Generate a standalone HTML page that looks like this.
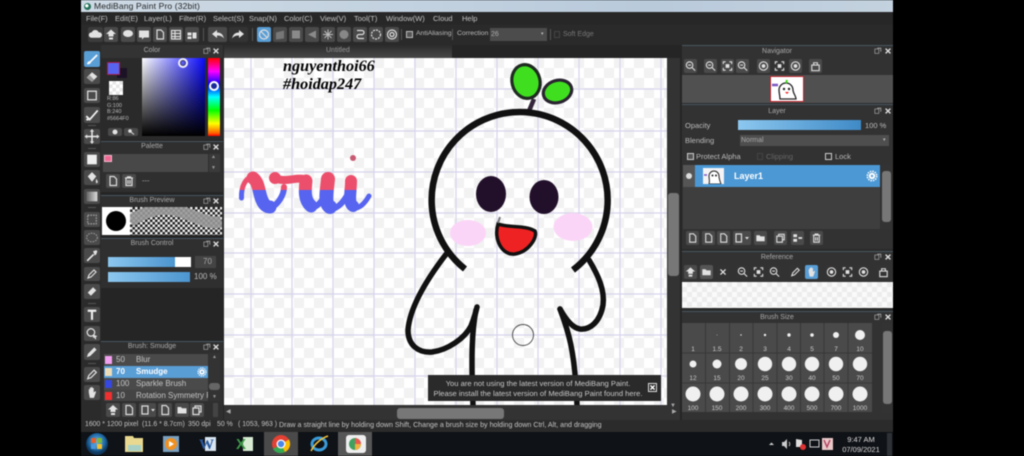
<!DOCTYPE html>
<html><head><meta charset="utf-8"><style>
*{box-sizing:border-box}
html,body{margin:0;padding:0;background:#000;width:1024px;height:456px;overflow:hidden}
body{font-family:"Liberation Sans",sans-serif;color:#c4c4c4;font-size:7.5px;position:relative}
#app{position:absolute;left:0;top:0;width:1024px;height:456px;filter:blur(.45px)}
.a{position:absolute;white-space:nowrap;line-height:1}
.r{position:absolute}
.b{position:absolute;background:#4a4a4a;border-radius:2px;width:14px;height:14px;display:block}
.b svg{position:absolute;left:0;top:0;width:100%;height:100%}
.h{position:absolute;color:#aaa;font-size:7px;line-height:12px;text-align:center;height:12px}
svg{display:block}
.i{fill:none;stroke:#ddd;stroke-width:1.2}
.f{fill:#e2e2e2;stroke:none}
</style></head><body><div id="app">
<svg width="0" height="0" style="position:absolute"><defs>
<symbol id="doc" viewBox="0 0 14 14"><path class="i" d="M4 2.5h4l2.5 2.5v6.5H4z"/></symbol>
<symbol id="fold" viewBox="0 0 14 14"><path class="f" d="M2.500 4h3.500l1 1.200h4.500v5.300H2.500z"/></symbol>
<symbol id="tr" viewBox="0 0 14 14"><path class="i" d="M3 4h8M5.500 4V2.800h3V4M4 4v7.500h6V4M6 6v4M8 6v4"/></symbol>
<symbol id="up" viewBox="0 0 14 14"><path class="f" d="M7 2l5 4.500H9.500V9h-5V6.500H2zM5 10h4v2H5z"/></symbol>
<symbol id="zm" viewBox="0 0 14 14"><circle class="i" cx="6" cy="6" r="3.500"/><path class="i" d="M8.500 8.500L12 12M4.500 6h3"/></symbol>
<symbol id="fit" viewBox="0 0 14 14"><path class="i" d="M2.500 5V2.500H5M9 2.500h2.500V5M11.500 9v2.500H9M5 11.500H2.500V9"/><rect class="f" x="5" y="5" width="4" height="4"/></symbol>
<symbol id="rot" viewBox="0 0 14 14"><circle class="i" cx="7" cy="7" r="4.500"/><circle class="f" cx="7" cy="7" r="2"/></symbol>
<symbol id="lock" viewBox="0 0 14 14"><rect class="i" x="3" y="6" width="8" height="6"/><path class="i" d="M5 6V3.500h4V6"/></symbol>
<symbol id="x" viewBox="0 0 14 14"><path d="M4 4l6 6M10 4l-6 6" stroke="#ddd" stroke-width="1.600"/></symbol>
<symbol id="hand" viewBox="0 0 14 14"><path class="f" d="M4 7V4h1v2.500V2.500h1.200V6V2h1.200v4V2.800h1.200V7l1.400-1.300.8.700-2 5.600H5z"/></symbol>
<symbol id="pen" viewBox="0 0 14 14"><path class="i" d="M3 11l1-3 5-5 2 2-5 5z"/></symbol>
<symbol id="pw" viewBox="0 0 10 10"><rect x="1" y="2.500" width="5" height="5.500" fill="none" stroke="#aaa" stroke-width=".8"/><path d="M4 1.500h4.500V6" fill="none" stroke="#aaa"/></symbol>
<symbol id="cl" viewBox="0 0 10 10"><path d="M2 2l6 6M8 2l-6 6" stroke="#ddd" stroke-width="1.700"/></symbol>
<symbol id="gear" viewBox="0 0 14 14"><circle cx="7" cy="7" r="3.800" fill="#fff"/><circle cx="7" cy="7" r="5.500" fill="none" stroke="#fff" stroke-width="1.800" stroke-dasharray="1.700 1.200"/><circle cx="7" cy="7" r="1.400" fill="#5b9fd5"/></symbol>
</defs></svg>

<!-- base -->
<div class="r" style="left:81px;top:0;width:812px;height:432px;background:#252525"></div>
<!-- title -->
<div class="r" style="left:81px;top:0;width:812px;height:12px;background:linear-gradient(90deg,#cdd9e4,#c3d2e0 40%,#b9cadb 70%,#c4d2df)"></div>
<div class="r" style="left:84px;top:3px;width:7px;height:7px;border-radius:50%;background:radial-gradient(circle at 40% 40%,#fff 25%,#2a7f62 30%,#1c4f44)"></div>
<div class="a" style="left:94px;top:2px;color:#222;font-size:8.500px;letter-spacing:.15px">MediBang Paint Pro (32bit)</div>
<!-- menu -->
<div class="r" style="left:81px;top:12px;width:812px;height:13px;background:#272727"></div>
<div class="a" style="left:86px;top:15px">File(F)</div><div class="a" style="left:115px;top:15px">Edit(E)</div><div class="a" style="left:144px;top:15px">Layer(L)</div><div class="a" style="left:179px;top:15px">Filter(R)</div><div class="a" style="left:213px;top:15px">Select(S)</div><div class="a" style="left:249px;top:15px">Snap(N)</div><div class="a" style="left:284px;top:15px">Color(C)</div><div class="a" style="left:320px;top:15px">View(V)</div><div class="a" style="left:354px;top:15px">Tool(T)</div><div class="a" style="left:386px;top:15px">Window(W)</div><div class="a" style="left:433px;top:15px">Cloud</div><div class="a" style="left:462px;top:15px">Help</div>
<!-- toolbar -->
<div class="r" style="left:81px;top:25px;width:812px;height:20px;background:#2a2a2a"></div>
<div class="b" style="left:88px;top:27px;width:15px;height:15px;background:#3c3c3c"><svg viewBox="0 0 14 14"><path class="f" d="M3 10a2.500 2.500 0 0 1 .5-5A3.500 3.500 0 0 1 10 5a2.500 2.500 0 0 1 1 5z"/></svg></div>
<div class="b" style="left:104px;top:27px;height:15px"><svg><use href="#up"/></svg></div>
<div class="b" style="left:121px;top:27px;height:15px"><svg viewBox="0 0 14 14"><ellipse class="f" cx="7" cy="6" rx="5" ry="3.500"/></svg></div>
<div class="b" style="left:137px;top:27px;height:15px"><svg viewBox="0 0 14 14"><path class="f" d="M2 3h10v7H7l-2 2v-2H2z"/></svg></div>
<div class="b" style="left:153px;top:27px;height:15px"><svg><use href="#doc"/></svg></div>
<div class="b" style="left:169px;top:27px;height:15px"><svg viewBox="0 0 14 14"><path class="i" d="M2.500 3h9v8.500h-9zM2.500 6h9M2.500 9h9M6 3v8.500"/></svg></div>
<div class="b" style="left:185px;top:27px;height:15px"><svg viewBox="0 0 14 14"><path class="f" d="M2.500 5h4v3h-4zM7.500 5h4v6h-4zM2.500 9h4v2.500h-4z"/></svg></div>
<div class="r" style="left:203px;top:28px;width:1px;height:13px;background:#555"></div>
<div class="b" style="left:208px;top:27px;width:19px;height:15px"><svg viewBox="0 0 19 15"><path class="f" d="M4 7l5-4v2.500c4 0 6 2 7 6-2-2.500-4-3-7-3V11z"/></svg></div>
<div class="b" style="left:229px;top:27px;width:19px;height:15px;background:#333"><svg viewBox="0 0 19 15"><path class="f" d="M15 7l-5-4v2.500c-4 0-6 2-7 6 2-2.500 4-3 7-3V11z"/></svg></div>
<div class="r" style="left:252px;top:28px;width:1px;height:13px;background:#555"></div>
<div class="b" style="left:257px;top:27px;height:15px;background:#5a9ed6"><svg viewBox="0 0 14 14"><circle class="i" cx="7" cy="7" r="4.500"/><path class="i" d="M4 4l6 6"/></svg></div>
<div class="b" style="left:273px;top:27px;height:15px"><svg viewBox="0 0 14 14"><path d="M3 5l8-2v8l-8 1z" fill="#777"/></svg></div>
<div class="b" style="left:289px;top:27px;height:15px"><svg viewBox="0 0 14 14"><rect x="3" y="3" width="8" height="8" fill="#8a8a8a"/></svg></div>
<div class="b" style="left:305px;top:27px;height:15px"><svg viewBox="0 0 14 14"><path d="M3 7l8-4v8z" fill="#8a8a8a"/></svg></div>
<div class="b" style="left:321px;top:27px;height:15px"><svg viewBox="0 0 14 14"><path d="M7 2v10M2 7h10M3.500 3.500l7 7M10.500 3.500l-7 7" stroke="#bbb"/></svg></div>
<div class="b" style="left:337px;top:27px;height:15px"><svg viewBox="0 0 14 14"><circle cx="7" cy="7" r="4.500" fill="#888"/></svg></div>
<div class="b" style="left:353px;top:27px;height:15px"><svg viewBox="0 0 14 14"><path class="i" d="M4 3h5a2 2 0 0 1 0 4H6a2 2 0 0 0 0 4h5"/></svg></div>
<div class="b" style="left:369px;top:27px;height:15px"><svg viewBox="0 0 14 14"><circle class="i" cx="7" cy="7" r="4.500" stroke-dasharray="2 1"/></svg></div>
<div class="b" style="left:385px;top:27px;height:15px"><svg viewBox="0 0 14 14"><circle class="i" cx="7" cy="7" r="4.500"/><circle class="i" cx="7" cy="7" r="2"/></svg></div>
<div class="r" style="left:401px;top:29px;width:1px;height:11px;background:#555"></div>
<div class="r" style="left:406px;top:31px;width:7px;height:7px;border:1px solid #bbb;background:#555"></div>
<div class="a" style="left:416px;top:31px;font-size:6.800px;color:#bbb">AntiAliasing</div>
<div class="r" style="left:452px;top:29px;width:1px;height:11px;background:#555"></div>
<div class="a" style="left:457px;top:31px;font-size:6.800px;color:#bbb">Correction</div>
<div class="r" style="left:490px;top:28px;width:57px;height:13px;background:#4c4c4c"></div>
<div class="a" style="left:491px;top:31px;font-size:7px;color:#aaa">26</div>
<div class="a" style="left:541px;top:32px;font-size:5px;color:#bbb">▾</div>
<div class="r" style="left:550px;top:29px;width:1px;height:11px;background:#555"></div>
<div class="r" style="left:554px;top:31px;width:6px;height:7px;border:1px solid #444"></div>
<div class="a" style="left:563px;top:31px;font-size:7px;color:#777">Soft Edge</div>

<!-- tools column -->
<div class="r" style="left:81px;top:45px;width:20px;height:375px;background:#2b2b2b"></div>
<div class="b" style="left:84px;top:51px;width:16px;height:16px;background:#5a9ed6"><svg viewBox="0 0 14 14"><path d="M2.500 11.500C3 9.500 4 9 5 9L11 3l1 1-6 6c0 1-1.500 2-3.500 1.500z" fill="#fff"/></svg></div>
<div class="b" style="left:84px;top:69px;width:16px;height:15px"><svg viewBox="0 0 14 14"><path class="f" d="M2 8l5-5 5 4-5 5z"/><path d="M5 6l4 4-2 2-5-4z" fill="#999"/></svg></div>
<div class="b" style="left:84px;top:88px;width:16px;height:15px"><svg viewBox="0 0 14 14"><rect class="i" x="3" y="3" width="8" height="8" stroke-width="1.400"/></svg></div>
<div class="b" style="left:84px;top:107px;width:16px;height:16px"><svg viewBox="0 0 14 14"><path d="M2 8l3 3 7-8M2 11h2" fill="none" stroke="#eee" stroke-width="1.600"/></svg></div>
<div class="b" style="left:84px;top:129px;width:16px;height:15px"><svg viewBox="0 0 14 14"><path d="M7 1.500v11M1.500 7h11" stroke="#eee" stroke-width="1.400"/><path class="f" d="M7 0l2 2.500H5zM7 14l2-2.500H5zM0 7l2.500-2v4zM14 7l-2.500-2v4z"/></svg></div>
<div class="b" style="left:84px;top:152px;width:16px;height:15px"><svg viewBox="0 0 14 14"><rect x="2.500" y="2.500" width="9" height="9" fill="#eee"/></svg></div>
<div class="b" style="left:84px;top:170px;width:16px;height:15px"><svg viewBox="0 0 14 14"><path class="f" d="M3 6l4-4 4 4-4 5z"/><path d="M11 8c1 2 2 3 1 4s-2 0-1-4z" fill="#ddd"/></svg></div>
<div class="b" style="left:84px;top:189px;width:16px;height:15px"><svg viewBox="0 0 14 14"><defs><linearGradient id="gg" x1="0" x2="1"><stop offset="0" stop-color="#666"/><stop offset="1" stop-color="#ddd"/></linearGradient></defs><rect x="2" y="2.500" width="10" height="9" fill="url(#gg)"/></svg></div>
<div class="b" style="left:84px;top:212px;width:16px;height:15px"><svg viewBox="0 0 14 14"><rect x="3" y="3" width="8" height="8" fill="none" stroke="#aaa" stroke-dasharray="1.500 1"/></svg></div>
<div class="b" style="left:84px;top:230px;width:16px;height:15px"><svg viewBox="0 0 14 14"><ellipse cx="7" cy="7" rx="5" ry="4" fill="none" stroke="#999" stroke-dasharray="1.500 1"/></svg></div>
<div class="b" style="left:84px;top:248px;width:16px;height:15px"><svg viewBox="0 0 14 14"><path d="M2.500 12l6-6" stroke="#eee" stroke-width="1.500"/><path class="f" d="M8 3l3-1 1 1-1 3-1.500 1z"/></svg></div>
<div class="b" style="left:84px;top:267px;width:16px;height:14px"><svg><use href="#pen"/></svg></div>
<div class="b" style="left:84px;top:284px;width:16px;height:15px"><svg viewBox="0 0 14 14"><path class="f" d="M3 8l5-5 3 3-5 5z"/></svg></div>
<div class="b" style="left:84px;top:307px;width:16px;height:15px"><svg viewBox="0 0 14 14"><path d="M3 3.500h8M7 3.500V12" stroke="#eee" stroke-width="2"/></svg></div>
<div class="b" style="left:84px;top:326px;width:16px;height:15px"><svg viewBox="0 0 14 14"><circle class="i" cx="6" cy="6" r="3.500"/><path class="f" d="M8 8l4 1.500-1.500 1L11 12l-1 .5-1-2-1 1z"/></svg></div>
<div class="b" style="left:84px;top:344px;width:16px;height:16px"><svg viewBox="0 0 14 14"><path class="f" d="M2.500 11.500l1-3L9 3l2 2-5.500 5.500z"/></svg></div>
<div class="b" style="left:84px;top:367px;width:16px;height:15px"><svg><use href="#pen"/></svg></div>
<div class="b" style="left:84px;top:385px;width:16px;height:15px"><svg><use href="#hand"/></svg></div>
<div class="r" style="left:88px;top:125px;width:8px;height:1px;background:#555"></div><div class="r" style="left:88px;top:148px;width:8px;height:1px;background:#555"></div><div class="r" style="left:88px;top:207px;width:8px;height:1px;background:#555"></div><div class="r" style="left:88px;top:303px;width:8px;height:1px;background:#555"></div><div class="r" style="left:88px;top:363px;width:8px;height:1px;background:#555"></div>

<!-- Color panel -->
<div class="r" style="left:101px;top:45px;width:122px;height:95px;background:#2a2a2a"></div>
<div class="r" style="left:101px;top:45px;width:122px;height:13px;background:#333"></div>
<div class="h" style="left:101px;top:45px;width:102px">Color</div>
<svg class="r" style="left:203px;top:47px" width="8" height="8"><use href="#pw"/></svg><svg class="r" style="left:212px;top:47px" width="8" height="8"><use href="#cl"/></svg>
<div class="r" style="left:117px;top:68px;width:10px;height:10px;background:#1c1226"></div>
<div class="r" style="left:107px;top:62px;width:13px;height:13px;background:#5664f0;border:1.500px solid #a51d4a"></div>
<div class="r" style="left:109px;top:81px;width:14px;height:14px;background:repeating-conic-gradient(#e6e6e6 0 25%,#fff 0 50%) 0 0/7px 7px"></div>
<div class="a" style="left:107px;top:96px;font-size:5.500px;line-height:6.500px;color:#bbb">R:86<br>G:100<br>B:240<br>#5664F0</div>
<div class="b" style="left:108px;top:128px;width:14px;height:8px"><svg viewBox="0 0 14 8"><circle class="f" cx="7" cy="4" r="2.500"/></svg></div>
<div class="b" style="left:124px;top:128px;width:14px;height:8px"><svg viewBox="0 0 14 8"><circle class="f" cx="6" cy="3" r="1.800"/><path d="M7 4l3 2.500" stroke="#ddd"/></svg></div>
<div class="r" style="left:142px;top:58px;width:63px;height:78px;background:linear-gradient(to bottom,rgba(0,0,0,0),#000),linear-gradient(to right,#fff,#0a0aff)"></div>
<div class="r" style="left:178px;top:58px;width:10px;height:10px;border-radius:50%;border:2px solid #eef;box-shadow:inset 0 0 0 1px #335"></div>
<div class="r" style="left:208px;top:58px;width:12px;height:78px;background:linear-gradient(to bottom,#f00 0,#f0f 17%,#00f 34%,#0ff 50%,#0f0 67%,#ff0 84%,#f60 96%,#f00 100%)"></div>
<div class="r" style="left:209px;top:81px;width:10px;height:10px;border-radius:50%;border:2px solid #fff;background:#1a2a9a"></div>

<!-- Palette -->
<div class="r" style="left:101px;top:141px;width:122px;height:51px;background:#2f2f2f;border-top:1px solid #4a5660"></div>
<div class="h" style="left:101px;top:141px;width:102px">Palette</div>
<svg class="r" style="left:203px;top:143px" width="8" height="8"><use href="#pw"/></svg><svg class="r" style="left:212px;top:143px" width="8" height="8"><use href="#cl"/></svg>
<div class="r" style="left:103px;top:154px;width:105px;height:18px;background:#484848"></div>
<div class="r" style="left:104px;top:155px;width:8px;height:7px;background:#ee6a92;border:1.500px solid #f3b8cf"></div>
<div class="r" style="left:209px;top:154px;width:11px;height:18px;background:#3a3a3a"></div>
<div class="a" style="left:211px;top:155px;font-size:5px;color:#999">▲</div><div class="a" style="left:211px;top:166px;font-size:5px;color:#999">▼</div>
<div class="b" style="left:106px;top:174px"><svg><use href="#doc"/></svg></div><div class="b" style="left:122px;top:174px"><svg><use href="#tr"/></svg></div>
<div class="a" style="left:142px;top:177px;color:#aaa">---</div>

<!-- Brush Preview -->
<div class="r" style="left:101px;top:195px;width:122px;height:40px;background:#2f2f2f;border-top:1px solid #4a5660"></div>
<div class="h" style="left:101px;top:195px;width:102px">Brush Preview</div>
<svg class="r" style="left:203px;top:197px" width="8" height="8"><use href="#pw"/></svg><svg class="r" style="left:212px;top:197px" width="8" height="8"><use href="#cl"/></svg>
<div class="r" style="left:102px;top:207px;width:28px;height:28px;background:#fff"></div>
<div class="r" style="left:106px;top:211px;width:20px;height:20px;background:#000;border-radius:50%"></div>
<div class="r" style="left:130px;top:207px;width:92px;height:28px;background:repeating-conic-gradient(#222 0 25%,#eee 0 50%) 0 0/5px 5px"></div>
<svg class="r" style="left:130px;top:207px" width="92" height="28"><path d="M0 14C20 2 35 -2 55 6s30 12 37 8" stroke="#999" stroke-width="12" fill="none" opacity=".88"/></svg>

<!-- Brush Control -->
<div class="r" style="left:101px;top:238px;width:122px;height:50px;background:#2f2f2f;border-top:1px solid #4a5660"></div>
<div class="h" style="left:101px;top:238px;width:102px">Brush Control</div>
<svg class="r" style="left:203px;top:240px" width="8" height="8"><use href="#pw"/></svg><svg class="r" style="left:212px;top:240px" width="8" height="8"><use href="#cl"/></svg>
<div class="r" style="left:108px;top:257px;width:83px;height:10px;background:#fff"></div>
<div class="r" style="left:108px;top:257px;width:67px;height:10px;background:linear-gradient(90deg,#8cc7ef,#4c95cf)"></div>
<div class="r" style="left:195px;top:256px;width:21px;height:12px;background:#444"></div><div class="a" style="left:203px;top:258px;font-size:8px;color:#aaa">70</div>
<div class="r" style="left:108px;top:272px;width:82px;height:10px;background:linear-gradient(90deg,#8cc7ef,#4c95cf)"></div>
<div class="a" style="left:194px;top:273px;font-size:8px;color:#bbb">100 %</div>

<!-- Brush panel -->
<div class="r" style="left:101px;top:341px;width:122px;height:79px;background:#2f2f2f;border-top:1px solid #4a5660"></div>
<div class="h" style="left:101px;top:341px;width:102px">Brush: Smudge</div>
<svg class="r" style="left:203px;top:343px" width="8" height="8"><use href="#pw"/></svg><svg class="r" style="left:212px;top:343px" width="8" height="8"><use href="#cl"/></svg>
<div class="r" style="left:104px;top:354px;width:104px;height:12px;background:#4a4a4a"></div>
<div class="r" style="left:104px;top:366px;width:104px;height:12px;background:#5a9ed6"></div>
<div class="r" style="left:104px;top:378px;width:104px;height:12px;background:#4a4a4a"></div>
<div class="r" style="left:104px;top:390px;width:104px;height:11px;background:#444;overflow:hidden"></div>
<div class="r" style="left:105px;top:356px;width:7px;height:8px;background:#f0a0ee"></div><div class="r" style="left:105px;top:368px;width:7px;height:8px;background:#ecdcb8"></div><div class="r" style="left:105px;top:380px;width:7px;height:8px;background:#3648e0"></div><div class="r" style="left:105px;top:392px;width:7px;height:8px;background:#ee3030"></div>
<div class="a" style="left:116px;top:356px;font-size:8px">50</div><div class="a" style="left:136px;top:356px;font-size:8px">Blur</div>
<div class="a" style="left:116px;top:368px;font-size:8px;color:#fff;font-weight:bold">70</div><div class="a" style="left:136px;top:368px;font-size:8px;color:#fff;font-weight:bold">Smudge</div>
<svg class="r" style="left:197px;top:367px" width="10" height="10"><use href="#gear"/></svg>
<div class="a" style="left:116px;top:380px;font-size:8px">100</div><div class="a" style="left:136px;top:380px;font-size:8px">Sparkle Brush</div>
<div class="a" style="left:116px;top:392px;font-size:8px">10</div><div class="r" style="left:136px;top:390px;width:72px;height:11px;overflow:hidden"><div class="a" style="left:0;top:2px;font-size:8px">Rotation Symmetry Pen</div></div>
<div class="r" style="left:209px;top:353px;width:11px;height:48px;background:#333"></div>
<div class="r" style="left:209px;top:383px;width:11px;height:7px;background:#666;border-radius:3px"></div>
<div class="a" style="left:212px;top:355px;font-size:5px;color:#999">▲</div><div class="a" style="left:212px;top:395px;font-size:5px;color:#999">▼</div>
<div class="b" style="left:106px;top:403px"><svg><use href="#up"/></svg></div><div class="b" style="left:122px;top:403px"><svg><use href="#doc"/></svg></div><div class="b" style="left:139px;top:403px;width:17px"><svg viewBox="0 0 17 14"><path class="i" d="M3 3h6v8H3z"/><path d="M12 6h4l-2 2.500z" fill="#ddd"/></svg></div><div class="b" style="left:158px;top:403px"><svg><use href="#doc"/></svg></div><div class="b" style="left:175px;top:403px"><svg><use href="#fold"/></svg></div><div class="b" style="left:190px;top:403px"><svg viewBox="0 0 14 14"><path class="i" d="M3 5h6v6.500H3zM5 5V3h6v6H9"/></svg></div>
<div class="r" style="left:213px;top:403px;width:5px;height:14px;background:#444"></div>

<!-- Canvas tabs -->
<div class="r" style="left:224px;top:45px;width:228px;height:13px;background:linear-gradient(#2c2c2c,#474747)"></div>
<div class="a" style="left:326px;top:47px;font-size:7px;color:#999">Untitled</div>

<!-- Canvas -->
<div class="r" style="left:224px;top:58px;width:443px;height:347px;background:repeating-conic-gradient(#f2f2f2 0 25%,#fff 0 50%) 0 0/20px 20px"></div>
<svg class="r" style="left:0;top:0" width="1024" height="456" viewBox="0 0 1024 456">
<defs><linearGradient id="vui" gradientUnits="userSpaceOnUse" x1="0" y1="160" x2="0" y2="220"><stop offset=".5" stop-color="#ec4f6c"/><stop offset=".5" stop-color="#5664f0"/></linearGradient><clipPath id="cv"><rect x="224" y="58" width="443" height="347"/></clipPath></defs>
<g clip-path="url(#cv)">
<g stroke="#d6d4ea" stroke-width="1.200"><path d="M251 58V405M292 58V405M333 58V405M374 58V405M415 58V405M456 58V405M497 58V405M538 58V405M579 58V405M620 58V405M661 58V405M224 89H667M224 131H667M224 172H667M224 213H667M224 253H667M224 294H667M224 335H667M224 376H667"/></g>
<g fill="none" stroke="url(#vui)" stroke-linecap="round" stroke-linejoin="round">
<path d="M241.500 198C241 186 246 177 253 177" stroke-width="5"/>
<path d="M253 178C259 182 259 194 262 200C264 205 267 207 270 207" stroke-width="13"/>
<path d="M270 208C278 205 284 195 284 187" stroke-width="6"/>
<path d="M275 178C285 183 295 177 304 179" stroke-width="8"/>
<circle cx="275" cy="178" r="3" stroke-width="6"/>
<path d="M306 181C305 190 304 200 311 206" stroke-width="13"/>
<path d="M311 208C318 207 323 200 326 192" stroke-width="6"/>
<path d="M328 179C327 190 324 203 330 207" stroke-width="14"/>
<path d="M330 209C339 209 345 200 350 190" stroke-width="6"/>
<path d="M351 181C351 192 348 203 353 206" stroke-width="12"/>
<path d="M353 208C360 209 365 203 369 196" stroke-width="5"/>
</g>
<circle cx="353" cy="158" r="3" fill="#c85a72"/>
<path d="M534 99L529 111" stroke="#33263a" stroke-width="4.500"/>
<ellipse cx="526" cy="81.500" rx="14" ry="17" transform="rotate(-14 526 81.500)" fill="#3fdf20" stroke="#1f2a20" stroke-width="3.200"/>
<ellipse cx="557.500" cy="91.500" rx="14.500" ry="11" transform="rotate(-18 557.500 91.500)" fill="#3fdf20" stroke="#2a2430" stroke-width="3.200"/>
<ellipse cx="468" cy="233" rx="18" ry="13" fill="#fbd5f7"/><ellipse cx="573" cy="227" rx="19.500" ry="14" fill="#fbd5f7"/>
<path d="M465 269A88 88 0 1 1 573 270" fill="none" stroke="#111" stroke-width="6.500" stroke-linecap="butt"/>
<ellipse cx="491" cy="194" rx="15" ry="18" fill="#22102a"/><ellipse cx="544" cy="197" rx="14.500" ry="17" fill="#22102a"/>
<path d="M498 224C510 228 525 225 535 231C538 238 528 252 515 254C503 256 493 240 498 224Z" fill="#ee2222" stroke="#111" stroke-width="3.500"/>
<path d="M500 217L498 223" stroke="#777" stroke-width="2"/>
<path d="M447 253C430 275 410 305 408 330C408 345 418 353 432 352C448 350 465 338 471 326C474 318 476 312 477 307" fill="none" stroke="#111" stroke-width="5.500" stroke-linecap="round"/>
<path d="M476 310C472 330 471 355 473 405" fill="none" stroke="#111" stroke-width="5.500" stroke-linecap="round"/>
<path d="M589 260C598 275 605 290 603 305C600 322 590 330 580 329C572 328 565 318 560 309" fill="none" stroke="#111" stroke-width="5.500" stroke-linecap="round"/>
<path d="M560 309C568 330 575 350 577 405" fill="none" stroke="#111" stroke-width="5.500" stroke-linecap="round"/>
<circle cx="523" cy="335" r="10.500" fill="none" stroke="#444" stroke-width=".9"/>
</g></svg>
<div class="a" style="left:283px;top:57px;font:italic bold 16.200px/18px 'Liberation Serif',serif;color:#000">nguyenthoi66<br>#hoidap247</div>

<!-- notification -->
<div class="r" style="left:428px;top:375px;width:233px;height:26px;background:#2a2a2a"></div>
<div class="a" style="left:428px;top:379px;width:220px;text-align:center;font-size:7.600px;line-height:9.500px;color:#c8c8c8">You are not using the latest version of MediBang Paint.<br>Please install the latest version of MediBang Paint found here.</div>
<div class="r" style="left:648px;top:383px;width:9px;height:9px;border:1px solid #ddd"></div>
<svg class="r" style="left:649px;top:384px" width="7" height="7" viewBox="0 0 10 10"><path d="M2 2l6 6M8 2l-6 6" stroke="#fff" stroke-width="2"/></svg>

<!-- scrollbars -->
<div class="r" style="left:667px;top:58px;width:13px;height:347px;background:#333"></div>
<div class="r" style="left:668px;top:193px;width:11px;height:83px;background:#777;border-radius:3px"></div>
<div class="r" style="left:224px;top:405px;width:456px;height:15px;background:#333"></div>
<div class="r" style="left:397px;top:408px;width:107px;height:11px;background:#777;border-radius:3px"></div>
<div class="a" style="left:226px;top:409px;font-size:6px;color:#aaa">◀</div><div class="a" style="left:672px;top:409px;font-size:6px;color:#aaa">▶</div><div class="a" style="left:670px;top:403px;font-size:6px;color:#aaa">▼</div>

<!-- status -->
<div class="r" style="left:81px;top:420px;width:812px;height:12px;background:#2b2b2b"></div>
<div class="a" style="left:85px;top:422px;font-size:6.900px">1600 * 1200 pixel</div><div class="a" style="left:142px;top:422px;font-size:6.900px">(11.6 * 8.7cm)</div><div class="a" style="left:188px;top:422px;font-size:6.900px">350 dpi</div><div class="a" style="left:217px;top:422px;font-size:6.900px">50 %</div><div class="a" style="left:238px;top:422px;font-size:6.900px">( 1053, 963 )</div><div class="a" style="left:279px;top:422px;font-size:7.100px">Draw a straight line by holding down Shift, Change a brush size by holding down Ctrl, Alt, and dragging</div>

<!-- right panels -->
<div class="r" style="left:682px;top:45px;width:211px;height:375px;background:#2a2a2a"></div>
<!-- Navigator -->
<div class="r" style="left:682px;top:45px;width:211px;height:58px;background:#323232;border-top:1px solid #4a5660"></div>
<div class="h" style="left:682px;top:46px;width:190px">Navigator</div>
<svg class="r" style="left:874px;top:47px" width="8" height="8"><use href="#pw"/></svg><svg class="r" style="left:884px;top:47px" width="8" height="8"><use href="#cl"/></svg>
<div class="b" style="left:684px;top:59px;width:13px"><svg><use href="#zm"/></svg></div><div class="b" style="left:704px;top:59px;width:13px"><svg><use href="#zm"/></svg></div><div class="b" style="left:721px;top:59px;width:13px"><svg><use href="#fit"/></svg></div><div class="b" style="left:736px;top:59px;width:13px"><svg><use href="#zm"/></svg></div><div class="b" style="left:757px;top:59px;width:13px"><svg><use href="#rot"/></svg></div><div class="b" style="left:773px;top:59px;width:13px;background:#333"><svg><use href="#fit"/></svg></div><div class="b" style="left:789px;top:59px;width:13px"><svg><use href="#rot"/></svg></div><div class="b" style="left:809px;top:59px;width:13px"><svg><use href="#lock"/></svg></div>
<div class="r" style="left:682px;top:75px;width:211px;height:28px;background:#505050"></div>
<div class="r" style="left:770px;top:76px;width:34px;height:26px;background:#fff;border:1.500px solid #c0242e;overflow:hidden"><svg width="31" height="23" viewBox="0 0 31 23"><path d="M15 6a7 7 0 0 1 7 7c0 3 3 6 3 9H9c0-3-1-6-1-9a7 7 0 0 1 7-7z" fill="#fff" stroke="#222" stroke-width="1.300"/><circle cx="13" cy="12" r="1.200" fill="#222"/><circle cx="18" cy="12" r="1.200" fill="#222"/><path d="M14 15h4l-2 2z" fill="#e22"/><path d="M15 6l1-3" stroke="#4d2" stroke-width="2"/><path d="M1 8h6" stroke="#7a55c0" stroke-width="2.500"/></svg></div>

<!-- Layer -->
<div class="r" style="left:682px;top:104px;width:211px;height:145px;background:#323232;border-top:1px solid #4a5660"></div>
<div class="h" style="left:682px;top:106px;width:190px">Layer</div>
<svg class="r" style="left:874px;top:107px" width="8" height="8"><use href="#pw"/></svg><svg class="r" style="left:884px;top:107px" width="8" height="8"><use href="#cl"/></svg>
<div class="a" style="left:685px;top:122px;font-size:7.500px;color:#bbb">Opacity</div>
<div class="r" style="left:738px;top:120px;width:123px;height:10px;background:linear-gradient(90deg,#8cc7ef,#3f8ac6)"></div>
<div class="a" style="left:865px;top:122px;font-size:7.500px;color:#bbb">100 %</div>
<div class="a" style="left:685px;top:137px;font-size:7.500px;color:#bbb">Blending</div>
<div class="r" style="left:740px;top:135px;width:149px;height:11px;background:#4e4e4e"></div>
<div class="a" style="left:741px;top:137px;font-size:7px;color:#aaa">Normal</div><div class="a" style="left:883px;top:138px;font-size:5px;color:#bbb">▾</div>
<div class="r" style="left:687px;top:153px;width:7px;height:7px;border:1px solid #ccc;background:#555"></div><div class="a" style="left:696px;top:153px;font-size:7.500px;color:#bbb">Protect Alpha</div>
<div class="r" style="left:757px;top:153px;width:6px;height:7px;border:1px solid #444"></div><div class="a" style="left:766px;top:153px;font-size:7.500px;color:#666">Clipping</div>
<div class="r" style="left:825px;top:153px;width:7px;height:7px;border:1px solid #ccc"></div><div class="a" style="left:835px;top:153px;font-size:7.500px;color:#bbb">Lock</div>
<div class="r" style="left:683px;top:165px;width:197px;height:64px;background:#3e3e3e"></div>
<div class="r" style="left:683px;top:165px;width:12px;height:22px;background:#555"></div>
<div class="r" style="left:686px;top:173px;width:6px;height:6px;background:#ddd;border-radius:50%"></div>
<div class="r" style="left:695px;top:165px;width:185px;height:22px;background:#4c98d4"></div>
<div class="r" style="left:703px;top:168px;width:21px;height:16px;background:#f4f4f6"><svg width="21" height="16" viewBox="0 0 21 16"><path d="M11 3a5 5 0 0 1 5 5c0 3 1 5 2 8H6c1-3 0-5 0-8a5 5 0 0 1 5-5z" fill="#fff" stroke="#222"/><circle cx="9.500" cy="7.500" r="1" fill="#222"/><circle cx="13" cy="7.500" r="1" fill="#222"/><path d="M1 7h3" stroke="#7a55c0" stroke-width="1.500"/></svg></div>
<div class="a" style="left:734px;top:172px;font-size:9px;font-weight:bold;color:#fff">Layer1</div>
<svg class="r" style="left:866px;top:170px" width="12" height="12"><use href="#gear"/></svg>
<div class="r" style="left:881px;top:165px;width:10px;height:64px;background:#333"></div>
<div class="r" style="left:882px;top:171px;width:9px;height:51px;background:#777;border-radius:3px"></div>
<div class="b" style="left:686px;top:231px;width:13px"><svg><use href="#doc"/></svg></div><div class="b" style="left:702px;top:231px;width:13px"><svg><use href="#doc"/></svg></div><div class="b" style="left:717px;top:231px;width:13px"><svg><use href="#doc"/></svg></div><div class="b" style="left:733px;top:231px;width:18px"><svg viewBox="0 0 18 14"><path class="i" d="M3 3h5.500v8H3z"/><path d="M12 6h4l-2 2.500z" fill="#ddd"/></svg></div><div class="b" style="left:754px;top:231px;width:13px"><svg><use href="#fold"/></svg></div><div class="b" style="left:774px;top:231px;width:13px"><svg viewBox="0 0 14 14"><path class="i" d="M3 5h6v6.500H3zM5 5V3h6v6H9"/></svg></div><div class="b" style="left:791px;top:231px;width:13px"><svg viewBox="0 0 14 14"><path class="f" d="M2.500 3h4v3h-4zM2.500 8h4v3h-4zM8 6h4v2H8z"/></svg></div><div class="b" style="left:810px;top:231px;width:13px"><svg><use href="#tr"/></svg></div>

<!-- Reference -->
<div class="r" style="left:682px;top:251px;width:211px;height:57px;background:#323232;border-top:1px solid #4a5660"></div>
<div class="h" style="left:682px;top:252px;width:190px">Reference</div>
<svg class="r" style="left:874px;top:253px" width="8" height="8"><use href="#pw"/></svg><svg class="r" style="left:884px;top:253px" width="8" height="8"><use href="#cl"/></svg>
<div class="b" style="left:684px;top:265px;width:13px"><svg><use href="#up"/></svg></div><div class="b" style="left:700px;top:265px;width:13px;background:#555"><svg><use href="#fold"/></svg></div><div class="b" style="left:717px;top:265px;width:12px;background:#333"><svg><use href="#x"/></svg></div><div class="b" style="left:736px;top:265px;width:13px;background:#333"><svg><use href="#zm"/></svg></div><div class="b" style="left:752px;top:265px;width:13px;background:#333"><svg><use href="#fit"/></svg></div><div class="b" style="left:768px;top:265px;width:13px;background:#333"><svg><use href="#zm"/></svg></div><div class="b" style="left:789px;top:265px;width:13px;background:#333"><svg><use href="#pen"/></svg></div><div class="b" style="left:805px;top:265px;width:13px;background:#5a9ed6"><svg><use href="#hand"/></svg></div><div class="b" style="left:825px;top:265px;width:13px;background:#333"><svg><use href="#rot"/></svg></div><div class="b" style="left:841px;top:265px;width:13px;background:#333"><svg><use href="#fit"/></svg></div><div class="b" style="left:857px;top:265px;width:13px;background:#333"><svg><use href="#rot"/></svg></div><div class="b" style="left:877px;top:265px;width:13px;background:#333"><svg><use href="#lock"/></svg></div>
<div class="r" style="left:682px;top:282px;width:211px;height:26px;background:repeating-conic-gradient(#ececec 0 25%,#fafafa 0 50%) 0 0/10px 10px"></div>

<!-- Brush Size -->
<div class="r" style="left:682px;top:311px;width:211px;height:109px;background:#323232;border-top:1px solid #4a5660"></div>
<div class="h" style="left:682px;top:312px;width:190px">Brush Size</div>
<svg class="r" style="left:874px;top:313px" width="8" height="8"><use href="#pw"/></svg><svg class="r" style="left:884px;top:313px" width="8" height="8"><use href="#cl"/></svg>
<div class="r" style="left:682px;top:323px;width:190px;height:89px;background:#4a4a4a"></div>
<svg class="r" style="left:682px;top:323px" width="190" height="89"><g stroke="#383838" stroke-width="1"><path d="M0 30H190M0 60H190M23.500 0V89M47.500 0V89M71 0V89M95 0V89M118.500 0V89M142 0V89M166 0V89"/></g>
<g fill="#f0f0f0"><circle cx="35" cy="12" r=".4"/><circle cx="59" cy="12" r=".7"/><circle cx="83" cy="12" r="1.200"/><circle cx="107" cy="12" r="1.700"/><circle cx="130" cy="12" r="1.800"/><circle cx="154" cy="12" r="3"/><circle cx="178" cy="12" r="5"/><circle cx="11" cy="41" r="3.500"/><circle cx="35" cy="41" r="4.500"/><circle cx="59" cy="41" r="6"/><circle cx="83" cy="41" r="7.200"/><circle cx="107" cy="41" r="7.200"/><circle cx="130" cy="41" r="7.200"/><circle cx="154" cy="41" r="7.200"/><circle cx="178" cy="41" r="7.200"/><circle cx="11" cy="71" r="7.500"/><circle cx="35" cy="71" r="7.500"/><circle cx="59" cy="71" r="7.500"/><circle cx="83" cy="71" r="7.500"/><circle cx="107" cy="71" r="7.500"/><circle cx="130" cy="71" r="7.500"/><circle cx="154" cy="71" r="7.500"/><circle cx="178" cy="71" r="7.500"/></g>
<g fill="#ccc" font-size="6.500" text-anchor="middle" font-family="Liberation Sans, sans-serif"><text x="11" y="28">1</text><text x="35" y="28">1.5</text><text x="59" y="28">2</text><text x="83" y="28">3</text><text x="107" y="28">4</text><text x="130" y="28">5</text><text x="154" y="28">7</text><text x="178" y="28">10</text><text x="11" y="57">12</text><text x="35" y="57">15</text><text x="59" y="57">20</text><text x="83" y="57">25</text><text x="107" y="57">30</text><text x="130" y="57">40</text><text x="154" y="57">50</text><text x="178" y="57">70</text><text x="11" y="87">100</text><text x="35" y="87">150</text><text x="59" y="87">200</text><text x="83" y="87">300</text><text x="107" y="87">400</text><text x="130" y="87">500</text><text x="154" y="87">700</text><text x="178" y="87">1000</text></g></svg>
<div class="r" style="left:882px;top:323px;width:10px;height:90px;background:#333"></div>
<div class="r" style="left:883px;top:331px;width:9px;height:73px;background:#777;border-radius:3px"></div>

<!-- taskbar -->
<div class="r" style="left:81px;top:432px;width:812px;height:24px;background:#0f1216"></div>
<svg class="r" style="left:81px;top:432px" width="812" height="24" viewBox="81 432 812 24">
<defs><radialGradient id="orb" cx=".5" cy=".4"><stop offset="0" stop-color="#6fb6e8"/><stop offset=".7" stop-color="#1f6aa8"/><stop offset="1" stop-color="#10385c"/></radialGradient></defs>
<circle cx="97" cy="444" r="11" fill="url(#orb)"/><path d="M91 438h5v5h-5z" fill="#e4602c"/><path d="M97 438h5v5h-5z" fill="#7cb83a"/><path d="M91 444h5v5h-5z" fill="#4a96dc"/><path d="M97 444h5v5h-5z" fill="#f4c02c"/>
<path d="M125 436h8l1 2h9v14h-18z" fill="#e8d890"/><rect x="128" y="445" width="13" height="6" fill="#a8d0c4"/>
<rect x="163" y="436" width="16" height="16" fill="#7aa0c0"/><circle cx="171" cy="444" r="6" fill="#f09020"/><path d="M169 441l5 3-5 3z" fill="#fff"/>
<rect x="205" y="437" width="11" height="14" fill="#d8e4f0"/><text x="199" y="449" font-family="Liberation Serif, serif" font-weight="bold" font-size="15" fill="#2a5a9e">W</text>
<rect x="243" y="437" width="10" height="14" fill="#d8ecd4"/><text x="236" y="449" font-family="Liberation Sans, sans-serif" font-weight="bold" font-size="15" fill="#3e9a4a">X</text>
<rect x="264" y="432" width="34" height="24" fill="#4a4a4a"/><circle cx="281" cy="444" r="9" fill="#e34133"/><path d="M281 444L273 449A9 9 0 0 0 285 452z" fill="#34a853"/><path d="M281 444l8-4.500A9 9 0 0 1 285 452z" fill="#fbbc05"/><circle cx="281" cy="444" r="4.500" fill="#fff"/><circle cx="281" cy="444" r="3.200" fill="#4a86e8"/>
<ellipse cx="319" cy="444" rx="7" ry="6" fill="none" stroke="#3a9ad8" stroke-width="3"/><path d="M311 451C315 443 322 438 328 436" fill="none" stroke="#f2c03a" stroke-width="1.500"/>
<rect x="338" y="432" width="34" height="24" fill="#565656"/><rect x="346" y="435" width="20" height="18" rx="3" fill="#eee"/><circle cx="355" cy="444" r="6" fill="#3fa060"/><path d="M355 438a6 6 0 0 1 6 6h-6z" fill="#e85a50"/><path d="M355 444h6a6 6 0 0 1-6 6z" fill="#f0b040"/>
<path d="M769 445l2.500-2.500 2.500 2.500z" fill="#ccc"/><path d="M782 442h2l3-3v10l-3-3h-2z" fill="#ccc"/><path d="M789 442a3 3 0 0 1 0 4" stroke="#ccc" fill="none"/>
<path d="M796 439l6 1v7h-6z" fill="#ddd"/><circle cx="803" cy="447" r="3" fill="#d33"/>
<rect x="810" y="440" width="9" height="7" fill="none" stroke="#ccc"/>
<rect x="822" y="438" width="11" height="12" fill="#e8c8c8"/><path d="M824 440l3 7 3-7" fill="none" stroke="#b04060" stroke-width="1.400"/>
<rect x="887" y="433" width="5" height="23" fill="#2e3236"/></svg>
<div class="a" style="left:828px;top:436px;width:66px;text-align:center;font-size:7.500px;color:#ddd">9:47 AM</div>
<div class="a" style="left:828px;top:446px;width:66px;text-align:center;font-size:7.500px;color:#ddd">07/09/2021</div>
</div></body></html>
